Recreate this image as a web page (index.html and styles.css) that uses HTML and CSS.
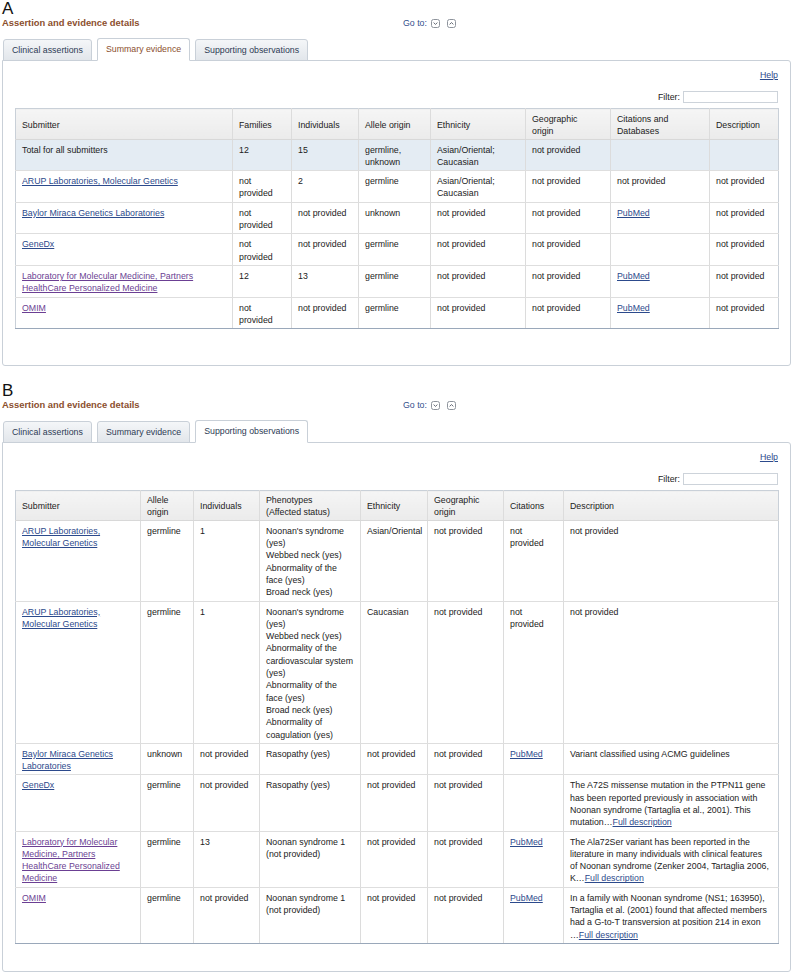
FILE: index.html
```html
<!DOCTYPE html>
<html>
<head>
<meta charset="utf-8">
<title>Assertion and evidence details</title>
<link rel="stylesheet" href="styles.css">
</head>
<body>
<section class="fig fig-a">
  <div class="fig-label">A</div>
  <div class="titlebar">
    <h2 class="title">Assertion and evidence details</h2>
    <div class="goto">Go to:
      <span class="gicon"><svg width="9" height="9" viewBox="0 0 9 9"><rect x="0.5" y="0.5" width="8" height="8" rx="2" fill="#fff" stroke="#8e949c"/><polyline points="2.6,3.6 4.5,5.4 6.4,3.6" fill="none" stroke="#555b66" stroke-width="0.9"/></svg></span>
      <span class="gicon"><svg width="9" height="9" viewBox="0 0 9 9"><rect x="0.5" y="0.5" width="8" height="8" rx="2" fill="#fff" stroke="#8e949c"/><polyline points="2.6,5.4 4.5,3.6 6.4,5.4" fill="none" stroke="#555b66" stroke-width="0.9"/></svg></span>
    </div>
  </div>
  <div class="tabs">
    <span class="tab">Clinical assertions</span>
    <span class="tab active">Summary evidence</span>
    <span class="tab">Supporting observations</span>
  </div>
  <div class="panel">
    <div class="help-row"><a class="link" href="#">Help</a></div>
    <div class="filter-row"><span class="filter-label">Filter:</span><span class="filter-input"></span></div>
    <table class="grid grid-a">
      <colgroup>
        <col style="width:217px"><col style="width:59px"><col style="width:67px"><col style="width:72px"><col style="width:95px"><col style="width:85px"><col style="width:99px"><col style="width:69px">
      </colgroup>
      <thead>
        <tr><th>Submitter</th><th>Families</th><th>Individuals</th><th>Allele origin</th><th>Ethnicity</th><th>Geographic<br>origin</th><th>Citations and<br>Databases</th><th>Description</th></tr>
      </thead>
      <tbody>
        <tr class="total"><td>Total for all submitters</td><td>12</td><td>15</td><td>germline, unknown</td><td>Asian/Oriental; Caucasian</td><td>not provided</td><td></td><td></td></tr>
        <tr><td><a class="link" href="#">ARUP Laboratories, Molecular Genetics</a></td><td>not provided</td><td>2</td><td>germline</td><td>Asian/Oriental; Caucasian</td><td>not provided</td><td>not provided</td><td>not provided</td></tr>
        <tr><td><a class="link" href="#">Baylor Miraca Genetics Laboratories</a></td><td>not provided</td><td>not provided</td><td>unknown</td><td>not provided</td><td>not provided</td><td><a class="link" href="#">PubMed</a></td><td>not provided</td></tr>
        <tr><td><a class="link" href="#">GeneDx</a></td><td>not provided</td><td>not provided</td><td>germline</td><td>not provided</td><td>not provided</td><td></td><td>not provided</td></tr>
        <tr><td><a class="link visited" href="#">Laboratory for Molecular Medicine, Partners HealthCare Personalized Medicine</a></td><td>12</td><td>13</td><td>germline</td><td>not provided</td><td>not provided</td><td><a class="link" href="#">PubMed</a></td><td>not provided</td></tr>
        <tr><td><a class="link visited" href="#">OMIM</a></td><td>not provided</td><td>not provided</td><td>germline</td><td>not provided</td><td>not provided</td><td><a class="link" href="#">PubMed</a></td><td>not provided</td></tr>
      </tbody>
    </table>
  </div>
</section>

<section class="fig fig-b">
  <div class="fig-label">B</div>
  <div class="titlebar">
    <h2 class="title">Assertion and evidence details</h2>
    <div class="goto">Go to:
      <span class="gicon"><svg width="9" height="9" viewBox="0 0 9 9"><rect x="0.5" y="0.5" width="8" height="8" rx="2" fill="#fff" stroke="#8e949c"/><polyline points="2.6,3.6 4.5,5.4 6.4,3.6" fill="none" stroke="#555b66" stroke-width="0.9"/></svg></span>
      <span class="gicon"><svg width="9" height="9" viewBox="0 0 9 9"><rect x="0.5" y="0.5" width="8" height="8" rx="2" fill="#fff" stroke="#8e949c"/><polyline points="2.6,5.4 4.5,3.6 6.4,5.4" fill="none" stroke="#555b66" stroke-width="0.9"/></svg></span>
    </div>
  </div>
  <div class="tabs">
    <span class="tab">Clinical assertions</span>
    <span class="tab">Summary evidence</span>
    <span class="tab active">Supporting observations</span>
  </div>
  <div class="panel">
    <div class="help-row"><a class="link" href="#">Help</a></div>
    <div class="filter-row"><span class="filter-label">Filter:</span><span class="filter-input"></span></div>
    <table class="grid grid-b">
      <colgroup>
        <col style="width:125px"><col style="width:53px"><col style="width:66px"><col style="width:101px"><col style="width:67px"><col style="width:76px"><col style="width:60px"><col style="width:215px">
      </colgroup>
      <thead>
        <tr><th>Submitter</th><th>Allele<br>origin</th><th>Individuals</th><th>Phenotypes<br>(Affected status)</th><th>Ethnicity</th><th>Geographic<br>origin</th><th>Citations</th><th>Description</th></tr>
      </thead>
      <tbody>
        <tr><td><a class="link" href="#">ARUP Laboratories, Molecular Genetics</a></td><td>germline</td><td>1</td><td class="pheno">Noonan's syndrome<br>(yes)<br>Webbed neck (yes)<br>Abnormality of the<br>face (yes)<br>Broad neck (yes)</td><td>Asian/Oriental</td><td>not provided</td><td>not provided</td><td>not provided</td></tr>
        <tr><td><a class="link" href="#">ARUP Laboratories, Molecular Genetics</a></td><td>germline</td><td>1</td><td class="pheno">Noonan's syndrome<br>(yes)<br>Webbed neck (yes)<br>Abnormality of the<br>cardiovascular system<br>(yes)<br>Abnormality of the<br>face (yes)<br>Broad neck (yes)<br>Abnormality of<br>coagulation (yes)</td><td>Caucasian</td><td>not provided</td><td>not provided</td><td>not provided</td></tr>
        <tr><td><a class="link" href="#">Baylor Miraca Genetics Laboratories</a></td><td>unknown</td><td>not provided</td><td class="pheno">Rasopathy (yes)</td><td>not provided</td><td>not provided</td><td><a class="link" href="#">PubMed</a></td><td class="desc">Variant classified using ACMG guidelines</td></tr>
        <tr><td><a class="link" href="#">GeneDx</a></td><td>germline</td><td>not provided</td><td class="pheno">Rasopathy (yes)</td><td>not provided</td><td>not provided</td><td></td><td class="desc">The A72S missense mutation in the PTPN11 gene<br>has been reported previously in association with<br>Noonan syndrome (Tartaglia et al., 2001). This<br>mutation…<a class="link" href="#">Full description</a></td></tr>
        <tr><td><a class="link visited" href="#">Laboratory for Molecular Medicine, Partners HealthCare Personalized Medicine</a></td><td>germline</td><td>13</td><td class="pheno">Noonan syndrome 1<br>(not provided)</td><td>not provided</td><td>not provided</td><td><a class="link" href="#">PubMed</a></td><td class="desc">The Ala72Ser variant has been reported in the<br>literature in many individuals with clinical features<br>of Noonan syndrome (Zenker 2004, Tartaglia 2006,<br>K…<a class="link" href="#">Full description</a></td></tr>
        <tr><td><a class="link visited" href="#">OMIM</a></td><td>germline</td><td>not provided</td><td class="pheno">Noonan syndrome 1<br>(not provided)</td><td>not provided</td><td>not provided</td><td><a class="link" href="#">PubMed</a></td><td class="desc">In a family with Noonan syndrome (NS1; 163950),<br>Tartaglia et al. (2001) found that affected members<br>had a G-to-T transversion at position 214 in exon<br>…<a class="link" href="#">Full description</a></td></tr>
      </tbody>
    </table>
  </div>
</section>
</body>
</html>
```

FILE: styles.css
```css
* { box-sizing: border-box; }

html, body {
  margin: 0;
  padding: 0;
  background: #fff;
}

body {
  font-family: "Liberation Sans", Arial, Helvetica, sans-serif;
  font-size: 8.8px;
  color: #222;
}

.fig {
  padding: 0 1px 0 2px;
}

.fig + .fig {
  margin-top: 16px;
}

.fig-label {
  font-size: 17px;
  line-height: 17px;
  height: 17px;
  color: #111;
}

.titlebar {
  display: flex;
  align-items: center;
  height: 12px;
}

.title {
  flex: 0 0 401px;
  margin: 0;
  font-size: 9.4px;
  line-height: 12px;
  font-weight: bold;
  color: #8b4f2e;
}

.goto {
  display: flex;
  align-items: center;
  gap: 4px;
  line-height: 12px;
  color: #34508c;
}

.gicon {
  display: block;
  width: 9px;
  height: 9px;
}

.gicon + .gicon {
  margin-left: 3px;
}

.gicon svg {
  display: block;
}

.tabs {
  display: flex;
  align-items: flex-end;
  gap: 5px;
  margin-top: 9px;
  padding-left: 1px;
  margin-bottom: -1px;
  position: relative;
  z-index: 1;
}

.tab {
  height: 22px;
  line-height: 20px;
  padding: 0 8px;
  border: 1px solid #c9d0d8;
  border-radius: 3px 3px 0 0;
  background: linear-gradient(#f4f6f8, #e2e6eb);
  color: #2d3b55;
  white-space: nowrap;
}

.tab.active {
  height: 23px;
  line-height: 21px;
  background: #fff;
  border-bottom-color: #fff;
}

.fig-a .tab.active {
  color: #8b4f2e;
}

.panel {
  border: 1px solid #c9d0d8;
  border-radius: 0 3px 3px 3px;
  padding: 8px 12px 36px;
}

.fig-b .panel {
  padding-bottom: 27px;
}

.help-row {
  text-align: right;
  line-height: 12px;
}

.link {
  color: #2c4a8c;
  text-decoration: underline;
}

.link.visited {
  color: #6b3f93;
}

.filter-row {
  display: flex;
  justify-content: flex-end;
  align-items: center;
  gap: 3px;
  margin-top: 10px;
  height: 12px;
}

.filter-input {
  display: block;
  width: 95px;
  height: 12px;
  border: 1px solid #cdd3da;
  background: #fff;
}

.grid {
  width: 100%;
  margin-top: 5px;
  border-collapse: collapse;
  table-layout: fixed;
  line-height: 12.3px;
}

.grid th,
.grid td {
  padding: 4px 6px 2px 6px;
  border-left: 1px solid #dcdcdc;
  border-right: 1px solid #dcdcdc;
  text-align: left;
  vertical-align: top;
}

.grid th {
  padding-top: 4px;
  padding-bottom: 1px;
  font-weight: normal;
  vertical-align: middle;
  background: linear-gradient(#f5f5f5, #ebebeb);
  border-top: 1px solid #c9d0d8;
  border-bottom: 1px solid #d8d8d8;
  color: #222;
}

.grid-b th {
  padding-top: 3px;
  padding-bottom: 1px;
}

.grid td {
  border-bottom: 1px solid #dedede;
}

.grid th:first-child,
.grid td:first-child {
  border-left-color: #c9d0d8;
}

.grid th:last-child,
.grid td:last-child {
  border-right-color: #c9d0d8;
}

.grid tbody tr:last-child td {
  border-bottom: 1px solid #9aa8ba;
}

.grid tr.total td {
  background: #e4ecf3;
}

.grid-a td:nth-child(2) {
  padding-right: 8px;
}

.grid-b td:nth-child(5) {
  padding-right: 3px;
}

.grid-b td:nth-child(7) {
  padding-right: 9px;
}

.grid td.pheno,
.grid td.desc {
  white-space: nowrap;
}
```
